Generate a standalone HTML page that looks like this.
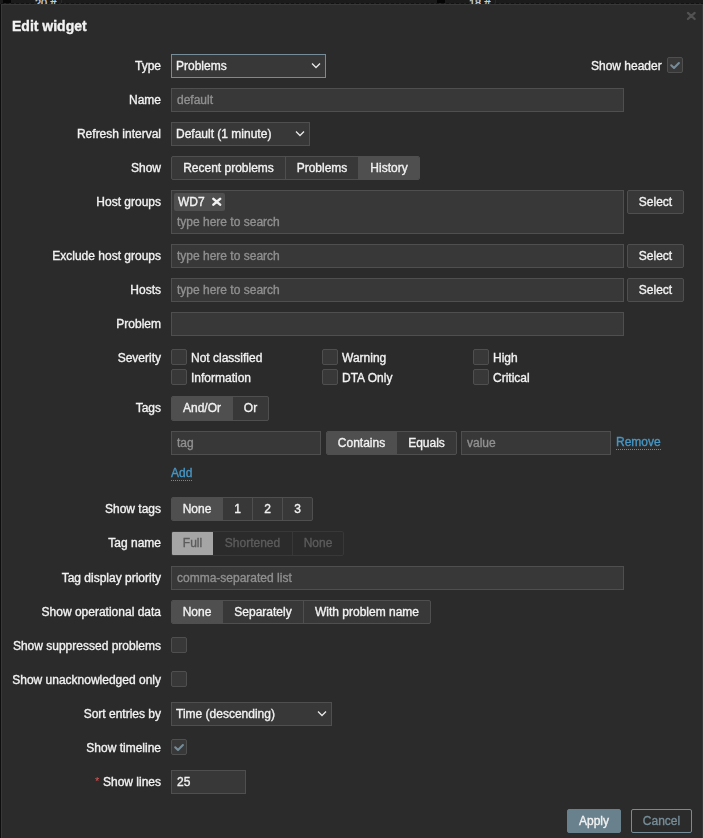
<!DOCTYPE html>
<html><head><meta charset="utf-8">
<style>
*{box-sizing:border-box;margin:0;padding:0}
html,body{width:703px;height:838px;overflow:hidden;background:#0e0e0e}
body{position:relative;font-family:"Liberation Sans",sans-serif;font-size:12px;color:#f2f2f2;-webkit-text-stroke:0.35px}
.a{position:absolute}
#strip{left:0;top:0;width:703px;height:4px;background:#1b1b1b;overflow:hidden}
#dlg{left:1px;top:4px;width:702px;height:840px;background:#2b2b2b;border:1px solid #383838}
.t{position:absolute;white-space:nowrap}
.lbl{position:absolute;left:0;width:161px;text-align:right;height:24px;line-height:24px;white-space:nowrap}
.inp{position:absolute;height:24px;background:#383838;border:1px solid #4f4f4f;line-height:22px;padding:0 5px;white-space:nowrap;color:#f2f2f2}
.ph{color:#909090}
.sel{position:absolute;height:24px;background:#383838;border:1px solid #4f4f4f;line-height:22px;padding:0 4px;white-space:nowrap}
.sel svg{position:absolute;right:4px;top:7px}
.rad{position:absolute;height:24px;display:flex;border:1px solid #4f4f4f;border-radius:2px;overflow:hidden;background:#383838}
.rad span{display:block;height:22px;line-height:22px;text-align:center;border-left:1px solid #4f4f4f;white-space:nowrap}
.rad span:first-child{border-left:none}
.rad span.on{background:#4f4f4f}
.btn{position:absolute;height:24px;background:#383838;border:1px solid #4f4f4f;border-radius:2px;line-height:22px;text-align:center;white-space:nowrap}
.cb{position:absolute;width:16px;height:16px;background:#383838;border:1px solid #4f4f4f;border-radius:2px}
.cb svg{position:absolute;left:0;top:0}
.cbl{position:absolute;white-space:nowrap;height:16px;line-height:16px}
.lnk{position:absolute;color:#4796c4;white-space:nowrap;line-height:14px;border-bottom:1px dotted #4796c4}
</style></head><body>
<div id="strip" class="a">
  <div class="a" style="left:3px;top:0;width:8px;height:3px;background:#050505"></div>
  <div class="a" style="left:0;top:3px;width:703px;height:1px;background:repeating-linear-gradient(90deg,#232323 0 1px,#121212 1px 4px,#232323 4px 5px)"></div>
  <div class="a" style="left:61px;top:0;width:1px;height:3px;background:#2a2a2a"></div>
  <div class="a" style="left:437px;top:0;width:8px;height:3px;background:#050505"></div>
  <div class="a" style="left:495px;top:0;width:1px;height:3px;background:#2a2a2a"></div>
  <div class="t" style="left:35px;top:-3px;font-size:11px;line-height:12px;color:#c8d0d8">20 #</div>
  <div class="t" style="left:469px;top:-3px;font-size:11px;line-height:12px;color:#c8d0d8">18 #</div>
</div>
<div id="dlg" class="a"></div>
<div id="wrap" class="a" style="left:0;top:0;width:703px;height:838px;will-change:transform">

<div class="t" style="left:12px;top:17px;font-size:14px;font-weight:bold;line-height:18px">Edit widget</div>
<svg class="a" style="left:686px;top:11px" width="11" height="10" viewBox="0 0 11 10"><path d="M1.9 1.9 L8.7 8.0 M8.7 1.9 L1.9 8.0" stroke="#525252" stroke-width="2.2" stroke-linecap="round"/></svg>

<!-- Type -->
<div class="lbl" style="top:54px">Type</div>
<div class="sel" style="left:171px;top:54px;width:155px;border-color:#768d99">Problems<svg width="10" height="7" viewBox="0 0 10 7"><path d="M1 1.5 L5 5.5 L9 1.5" stroke="#e8e8e8" stroke-width="1.3" fill="none"/></svg></div>
<div class="t" style="left:591px;top:54px;line-height:24px">Show header</div>
<div class="cb" style="left:667px;top:57px"><svg width="16" height="16" viewBox="0 0 16 16"><path d="M3.2 7.3 L6 10 L10.9 5.1" stroke="#768d99" stroke-width="2.1" fill="none" stroke-linecap="round" stroke-linejoin="round"/></svg></div>

<!-- Name -->
<div class="lbl" style="top:88px">Name</div>
<div class="inp ph" style="left:171px;top:88px;width:453px">default</div>

<!-- Refresh -->
<div class="lbl" style="top:122px">Refresh interval</div>
<div class="sel" style="left:171px;top:122px;width:139px">Default (1 minute)<svg width="10" height="7" viewBox="0 0 10 7"><path d="M1 1.5 L5 5.5 L9 1.5" stroke="#e8e8e8" stroke-width="1.3" fill="none"/></svg></div>

<!-- Show -->
<div class="lbl" style="top:156px">Show</div>
<div class="rad" style="left:171px;top:156px;width:249px"><span style="width:113px">Recent problems</span><span style="width:73px">Problems</span><span class="on" style="width:61px">History</span></div>

<!-- Host groups -->
<div class="lbl" style="top:190px">Host groups</div>
<div class="inp" style="left:171px;top:190px;width:453px;height:44px"></div>
<div class="a" style="left:174px;top:193px;width:51px;height:18px;background:#4f4f4f;border-radius:2px"></div>
<div class="t" style="left:178px;top:193px;line-height:18px">WD7</div>
<svg class="a" style="left:212px;top:197px" width="11" height="10" viewBox="0 0 11 10"><path d="M1.4 1.9 L8.1 7.6 M8.1 1.9 L1.4 7.6" stroke="#f2f2f2" stroke-width="2.5" stroke-linecap="round"/></svg>
<div class="t ph" style="left:177px;top:213px;line-height:18px">type here to search</div>
<div class="btn" style="left:627px;top:190px;width:57px">Select</div>

<!-- Exclude host groups -->
<div class="lbl" style="top:244px">Exclude host groups</div>
<div class="inp ph" style="left:171px;top:244px;width:453px">type here to search</div>
<div class="btn" style="left:627px;top:244px;width:57px">Select</div>

<!-- Hosts -->
<div class="lbl" style="top:278px">Hosts</div>
<div class="inp ph" style="left:171px;top:278px;width:453px">type here to search</div>
<div class="btn" style="left:627px;top:278px;width:57px">Select</div>

<!-- Problem -->
<div class="lbl" style="top:312px">Problem</div>
<div class="inp" style="left:171px;top:312px;width:453px"></div>

<!-- Severity -->
<div class="lbl" style="top:346px">Severity</div>
<div class="cb" style="left:171px;top:349px"></div><div class="cbl" style="left:191px;top:350px">Not classified</div>
<div class="cb" style="left:171px;top:369px"></div><div class="cbl" style="left:191px;top:370px">Information</div>
<div class="cb" style="left:322px;top:349px"></div><div class="cbl" style="left:342px;top:350px">Warning</div>
<div class="cb" style="left:322px;top:369px"></div><div class="cbl" style="left:342px;top:370px">DTA Only</div>
<div class="cb" style="left:473px;top:349px"></div><div class="cbl" style="left:493px;top:350px">High</div>
<div class="cb" style="left:473px;top:369px"></div><div class="cbl" style="left:493px;top:370px">Critical</div>

<!-- Tags -->
<div class="lbl" style="top:396px">Tags</div>
<div class="rad" style="left:171px;top:396px;width:98px;height:25px"><span class="on" style="width:60px;height:23px;line-height:23px">And/Or</span><span style="width:36px;height:23px;line-height:23px">Or</span></div>
<div class="inp ph" style="left:171px;top:431px;width:150px">tag</div>
<div class="rad" style="left:326px;top:431px;width:131px"><span class="on" style="width:69px">Contains</span><span style="width:60px">Equals</span></div>
<div class="inp ph" style="left:461px;top:431px;width:150px">value</div>
<div class="lnk" style="left:616px;top:435px">Remove</div>
<div class="lnk" style="left:171px;top:466px">Add</div>

<!-- Show tags -->
<div class="lbl" style="top:497px">Show tags</div>
<div class="rad" style="left:171px;top:497px;width:142px"><span class="on" style="width:50px">None</span><span style="width:30px">1</span><span style="width:30px">2</span><span style="width:30px">3</span></div>

<!-- Tag name -->
<div class="lbl" style="top:531px">Tag name</div>
<div class="rad" style="left:171px;top:531px;width:173px;height:25px;background:transparent;border-color:#383838"><span style="width:41px;height:23px;line-height:23px;background:#a5a5a5;color:#5c5c5c">Full</span><span style="width:79px;height:23px;line-height:23px;border-left:none;color:#5c5c5c">Shortened</span><span style="width:51px;height:23px;line-height:23px;border-color:#383838;color:#5c5c5c">None</span></div>

<!-- Tag display priority -->
<div class="lbl" style="top:566px">Tag display priority</div>
<div class="inp ph" style="left:171px;top:566px;width:453px">comma-separated list</div>

<!-- Show operational data -->
<div class="lbl" style="top:600px">Show operational data</div>
<div class="rad" style="left:171px;top:600px;width:260px"><span class="on" style="width:50px">None</span><span style="width:81px">Separately</span><span style="width:127px">With problem name</span></div>

<!-- Show suppressed -->
<div class="lbl" style="top:634px">Show suppressed problems</div>
<div class="cb" style="left:171px;top:637px"></div>
<div class="lbl" style="top:668px">Show unacknowledged only</div>
<div class="cb" style="left:171px;top:671px"></div>

<!-- Sort -->
<div class="lbl" style="top:702px">Sort entries by</div>
<div class="sel" style="left:171px;top:702px;width:161px">Time (descending)<svg width="10" height="7" viewBox="0 0 10 7"><path d="M1 1.5 L5 5.5 L9 1.5" stroke="#e8e8e8" stroke-width="1.3" fill="none"/></svg></div>

<!-- Show timeline -->
<div class="lbl" style="top:736px">Show timeline</div>
<div class="cb" style="left:171px;top:739px"><svg width="16" height="16" viewBox="0 0 16 16"><path d="M3.2 7.3 L6 10 L10.9 5.1" stroke="#768d99" stroke-width="2.1" fill="none" stroke-linecap="round" stroke-linejoin="round"/></svg></div>

<!-- Show lines -->
<div class="lbl" style="top:770px">Show lines</div>
<div class="t" style="left:95px;top:774px;font-size:11px;line-height:14px;color:#d95757;-webkit-text-stroke:0">*</div>
<div class="inp" style="left:171px;top:770px;width:75px">25</div>

<!-- Footer -->
<div class="btn" style="left:567px;top:809px;width:54px;background:#69808d;border-color:#69808d">Apply</div>
<div class="btn" style="left:631px;top:809px;width:61px;background:transparent;border-color:#768d99;color:#768d99">Cancel</div>

</div>
</body></html>
